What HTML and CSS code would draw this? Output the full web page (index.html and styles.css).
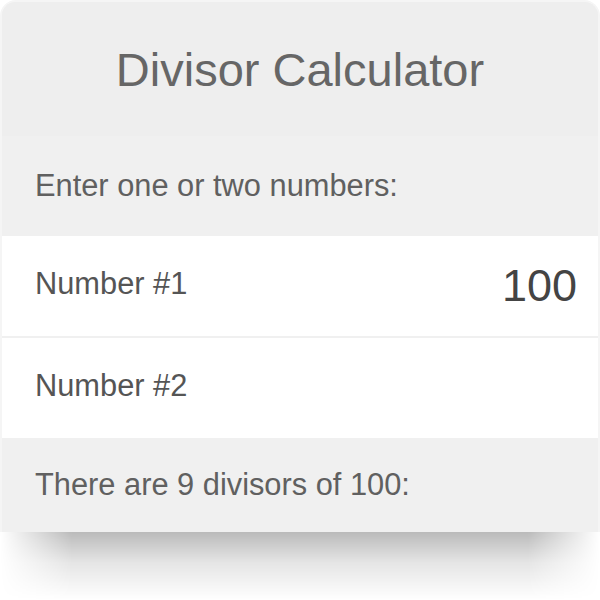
FILE: index.html
```html
<!DOCTYPE html>
<html lang="en">
<head>
    <meta charset="UTF-8">
    <meta name="viewport" content="width=device-width, initial-scale=1.0">
    <title>Divisor Calculator</title>
    <link rel="stylesheet" href="styles.css">
</head>
<body>
    <div class="calculator">
        <h1 class="title">Divisor Calculator</h1>

        <div class="row row-info">Enter one or two numbers:</div>

        <div class="row row-input">
            <label for="num1">Number #1</label>
            <input type="text" id="num1" value="100">
        </div>
        <div class="row row-input">
            <label for="num2">Number #2</label>
            <input type="text" id="num2" value="">
        </div>

        <div class="row row-info row-result">There are 9 divisors of 100:</div>
    </div>
    <!-- soft drop shadow under the card -->
    <div class="card-shadow"></div>
</body>
</html>
```

FILE: styles.css
```css
body {
    margin: 0;
    background: #fff;
    font-family: "Liberation Sans", Arial, sans-serif;
}
.calculator {
    width: 596px;
    border: 2px solid #f5f5f5;
    border-bottom: none;
    border-radius: 16px 16px 0 0;
    background: #eee;
}
.title {
    margin: 0;
    height: 134px;
    line-height: 136px;
    text-align: center;
    font-size: 47px;
    font-weight: normal;
    color: #666;
    background: #eee;
    border-radius: 14px 14px 0 0;
}
.row {
    display: flex;
    align-items: center;
    height: 100px;
    padding: 0 21px 0 33px;
    font-size: 30.8px;
}
.row-info {
    background: #f0f0f0;
    color: #606060;
}
.row-result {
    height: 94px;
}
.row-input {
    background: #fff;
    color: #555;
}
.row-input + .row-input {
    border-top: 2px solid #f0f0f0;
}
.row-input label {
    flex: 1;
    margin-top: -4px;
}
.row-input input {
    width: 200px;
    border: none;
    padding: 0;
    outline: none;
    text-align: right;
    font-family: inherit;
    font-size: 45px;
    color: #444;
    background: transparent;
}
.card-shadow {
    height: 68px;
    background: linear-gradient(rgba(0, 0, 0, 0.27), rgba(0, 0, 0, 0.1) 45%, rgba(0, 0, 0, 0));
    -webkit-mask-image: linear-gradient(to right, transparent, #000 12%, #000 88%, transparent);
    mask-image: linear-gradient(to right, transparent, #000 12%, #000 88%, transparent);
}
```
